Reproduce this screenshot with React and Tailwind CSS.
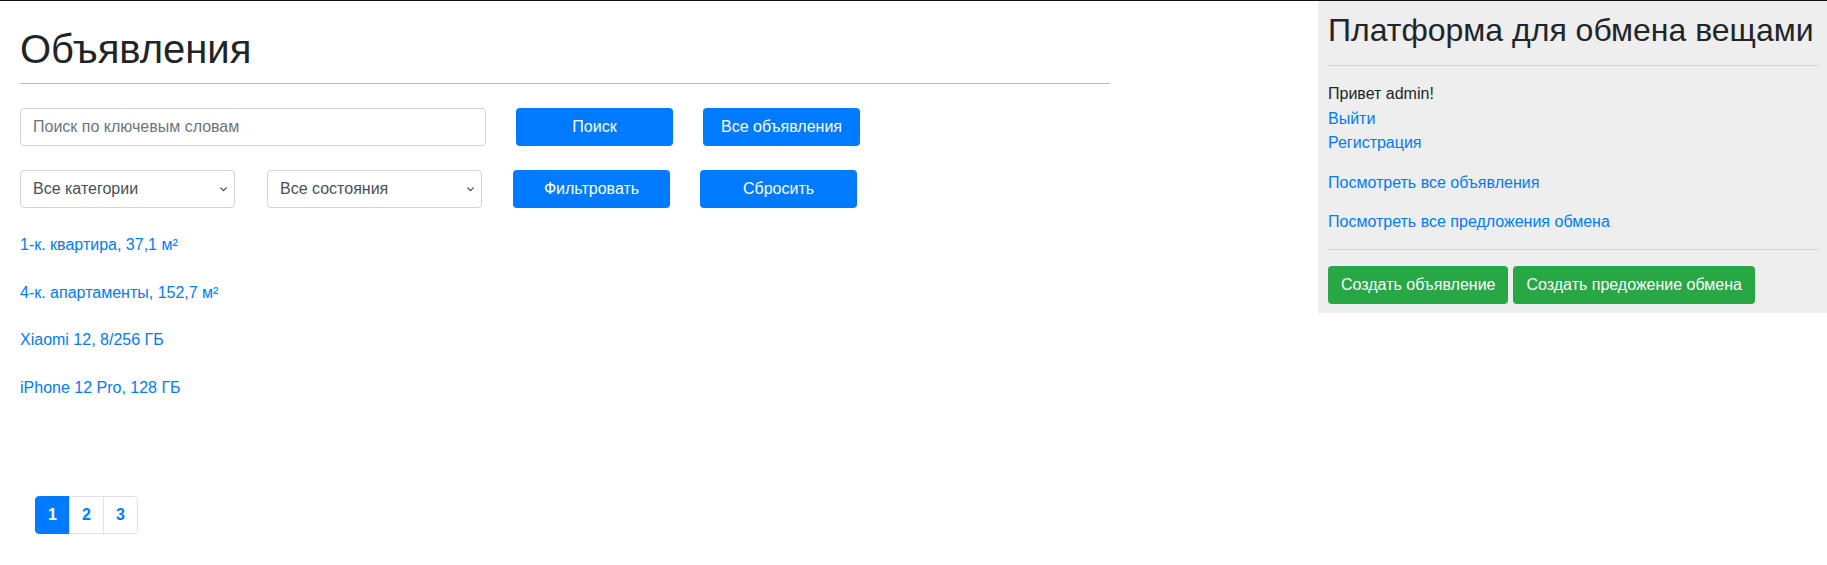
const LISTINGS = [
  '1-к. квартира, 37,1 м²',
  '4-к. апартаменты, 152,7 м²',
  'Xiaomi 12, 8/256 ГБ',
  'iPhone 12 Pro, 128 ГБ',
]

const Chevron = () => (
  <svg
    className="pointer-events-none absolute right-[7px] top-1/2 -translate-y-1/2 text-[#343a40]"
    width="9" height="9" viewBox="0 0 16 16" fill="none"
    stroke="currentColor" strokeWidth="2" strokeLinecap="round" strokeLinejoin="round"
  >
    <path d="M3 6l5 5 5-5" />
  </svg>
)

const Select = ({ label }) => (
  <div className="relative w-[215px]">
    <select className="appearance-none w-full h-[38px] pl-3 pr-7 border border-[#ced4da] rounded bg-white text-base text-[#495057] outline-none">
      <option>{label}</option>
    </select>
    <Chevron />
  </div>
)

const BlueButton = ({ children }) => (
  <button
    type="button"
    className="w-[157px] h-[38px] rounded bg-[#007bff] text-white text-base leading-6"
  >
    {children}
  </button>
)

const App = () => {
  return (
    <div className="min-h-[565px] bg-white border-t border-[#111] flex font-['Liberation_Sans',Arial,sans-serif] text-[#212529]">
      {/* Основная колонка */}
      <main className="w-[1318px] pl-5 pt-6">
        <h1 className="w-[1090px] text-[40px] leading-[48px] font-normal">Объявления</h1>
        <div className="w-[1090px] mt-[10px] h-px bg-[#bcbcbc]" />

        <div className="flex items-center mt-6">
          <input
            type="text"
            placeholder="Поиск по ключевым словам"
            className="w-[466px] h-[38px] px-3 border border-[#ced4da] rounded text-base text-[#495057] placeholder:text-[#6c757d] outline-none"
          />
          <div className="ml-[30px]"><BlueButton>Поиск</BlueButton></div>
          <div className="ml-[30px]"><BlueButton>Все объявления</BlueButton></div>
        </div>

        <div className="flex items-center mt-6">
          <Select label="Все категории" />
          <div className="ml-8"><Select label="Все состояния" /></div>
          <div className="ml-[31px]"><BlueButton>Фильтровать</BlueButton></div>
          <div className="ml-[30px]"><BlueButton>Сбросить</BlueButton></div>
        </div>

        <ul className="mt-[25px] flex flex-col gap-[23.5px]">
          {LISTINGS.map((item) => (
            <li key={item} className="leading-6">
              <a href="#" className="text-[#007bff]">{item}</a>
            </li>
          ))}
        </ul>

        <nav className="mt-[96.5px] ml-[15px] flex">
          <span className="w-[35px] h-[38px] flex items-center justify-center rounded-l border border-[#007bff] bg-[#007bff] text-white font-bold">1</span>
          <a href="#" className="-ml-px w-[35px] h-[38px] flex items-center justify-center border border-[#dee2e6] text-[#007bff] font-bold">2</a>
          <a href="#" className="-ml-px w-[35px] h-[38px] flex items-center justify-center rounded-r border border-[#dee2e6] text-[#007bff] font-bold">3</a>
        </nav>
      </main>

      {/* Боковая панель */}
      <aside className="w-[509px] self-start bg-[#eeeeee] pl-[10px] pr-2 pt-[10px] pb-[9px]">
        <h2 className="text-[32px] leading-[38.4px] font-normal whitespace-nowrap">Платформа для обмена вещами</h2>
        <div className="mt-4 h-px bg-[#d6d6d6]" />

        <div className="mt-4 leading-[24.5px]">
          <p>Привет admin!</p>
          <a href="#" className="block text-[#007bff]">Выйти</a>
          <a href="#" className="block text-[#007bff]">Регистрация</a>
        </div>

        <a href="#" className="block mt-[15px] leading-6 text-[#007bff]">Посмотреть все объявления</a>
        <a href="#" className="block mt-[15.5px] leading-6 text-[#007bff]">Посмотреть все предложения обмена</a>

        <div className="mt-[15px] h-px bg-[#d6d6d6]" />

        <div className="mt-4 flex gap-[5px]">
          <button type="button" className="h-[38px] px-[13px] rounded bg-[#28a745] text-white text-base">Создать объявление</button>
          <button type="button" className="h-[38px] px-[13px] rounded bg-[#28a745] text-white text-base">Создать предожение обмена</button>
        </div>
      </aside>
    </div>
  )
}

export default App
